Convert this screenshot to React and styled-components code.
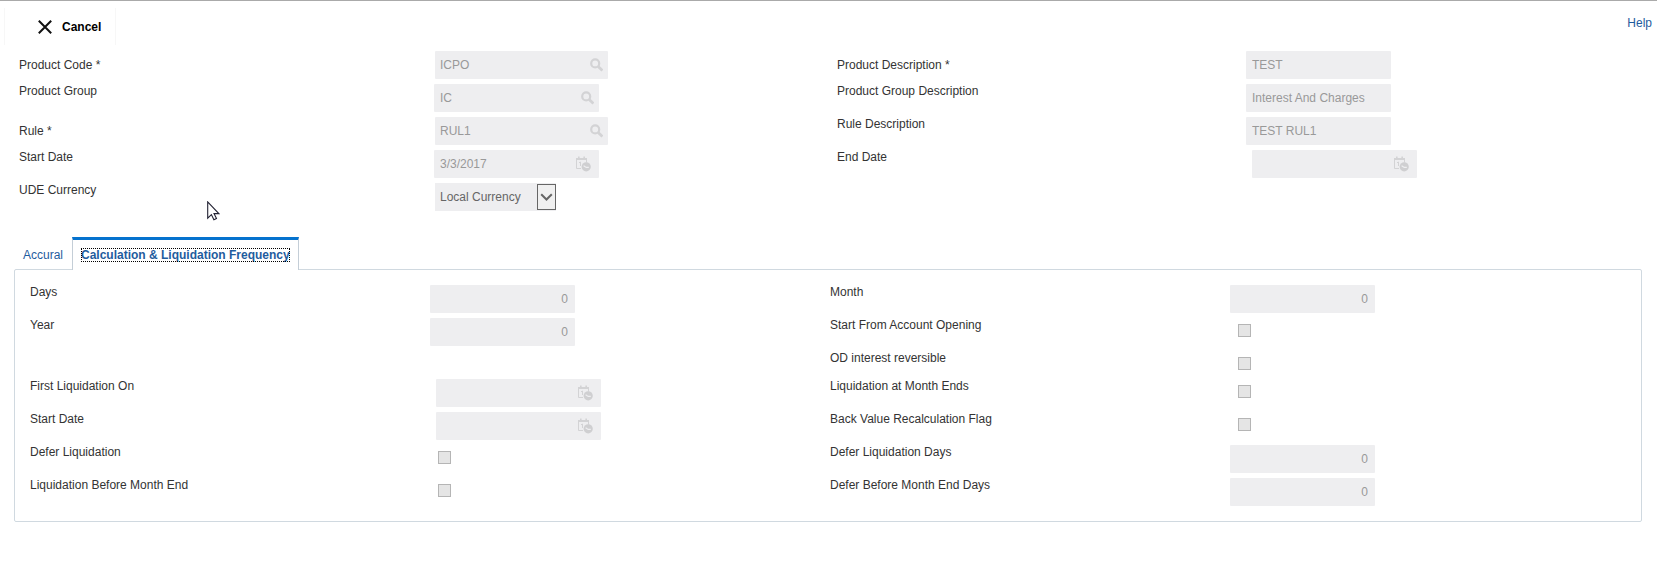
import React from 'react'
import styled, { createGlobalStyle } from 'styled-components'

const headerFields = [
  [
    { id: 'productCode', label: 'Product Code *', type: 'lov', value: 'ICPO', required: true },
    { id: 'productGroup', label: 'Product Group', type: 'lov', value: 'IC' },
    { id: 'rule', label: 'Rule *', type: 'lov', value: 'RUL1', required: true },
    { id: 'startDate', label: 'Start Date', type: 'date', value: '3/3/2017' },
    { id: 'udeCurrency', label: 'UDE Currency', type: 'select', value: 'Local Currency' },
  ],
  [
    { id: 'productDesc', label: 'Product Description *', type: 'text', value: 'TEST', required: true },
    { id: 'groupDesc', label: 'Product Group Description', type: 'text', value: 'Interest And Charges' },
    { id: 'ruleDesc', label: 'Rule Description', type: 'text', value: 'TEST RUL1' },
    { id: 'endDate', label: 'End Date', type: 'date', value: '' },
  ],
]

const frequencyFields = [
  [
    { id: 'days', label: 'Days', type: 'number', value: '0' },
    { id: 'year', label: 'Year', type: 'number', value: '0' },
  ],
  [
    { id: 'month', label: 'Month', type: 'number', value: '0' },
    { id: 'fromOpening', label: 'Start From Account Opening', type: 'check' },
    { id: 'odReversible', label: 'OD interest reversible', type: 'check', short: true },
  ],
]

const liquidationFields = [
  [
    { id: 'firstLiq', label: 'First Liquidation On', type: 'date', value: '' },
    { id: 'liqStart', label: 'Start Date', type: 'date', value: '' },
    { id: 'deferLiq', label: 'Defer Liquidation', type: 'check' },
    { id: 'liqBefore', label: 'Liquidation Before Month End', type: 'check' },
  ],
  [
    { id: 'liqMonthEnds', label: 'Liquidation at Month Ends', type: 'check' },
    { id: 'backValue', label: 'Back Value Recalculation Flag', type: 'check' },
    { id: 'deferDays', label: 'Defer Liquidation Days', type: 'number', value: '0' },
    { id: 'deferBefore', label: 'Defer Before Month End Days', type: 'number', value: '0' },
  ],
]

const SearchIcon = () => (
  <svg width="13" height="14" viewBox="0 0 13 14" fill="none" stroke="#d3d3d5">
    <circle cx="5.2" cy="5.4" r="4" strokeWidth="2.2" />
    <path d="M8.2 8.4l4.2 4.2" strokeWidth="2.8" />
  </svg>
)

const DateIcon = () => (
  <svg width="16" height="16" viewBox="0 0 16 16" fill="none">
    <path d="M6 12.5H1.5v-9M11.5 3.5v3" stroke="#d3d3d5" />
    <path d="M1 3h11" stroke="#d3d3d5" strokeWidth="2" />
    <path d="M3.8 3V.6M9.2 3V.6" stroke="#d3d3d5" strokeWidth="1.6" />
    <path d="M4 6.8l1.5-.8v4" stroke="#d3d3d5" />
    <circle cx="11.2" cy="10.8" r="4.6" fill="#cfcfd1" />
    <path d="M8.6 9.8l2.6 1.6h2.6" stroke="#eeeef0" strokeWidth="1.2" />
  </svg>
)

const CloseIcon = () => (
  <svg width="14" height="14" viewBox="0 0 14 14" stroke="#111" strokeWidth="2">
    <path d="M.8.8l12.4 12.4M13.2.8L.8 13.2" />
  </svg>
)

const Control = ({ id, type, value, required }) => {
  if (type === 'check') {
    return <Checkbox id={id} type="checkbox" disabled />
  }
  if (type === 'select') {
    return (
      <SelectBox>
        <Select id={id} defaultValue={value} disabled>
          <option>{value}</option>
        </Select>
        <Arrow>
          <svg width="13" height="9" viewBox="0 0 13 9" fill="none">
            <path d="M1.2 1.2l5.3 5.3 5.3-5.3" stroke="#666" strokeWidth="2" />
          </svg>
        </Arrow>
      </SelectBox>
    )
  }
  if (type === 'lov' || type === 'date') {
    return (
      <IconField $wide={required}>
        <Input id={id} defaultValue={value} $wide={required} disabled />
        <IconButton type="button" aria-label={type === 'date' ? 'Select date' : 'Search'} $date={type === 'date'} disabled>
          {type === 'date' ? <DateIcon /> : <SearchIcon />}
        </IconButton>
      </IconField>
    )
  }
  return (
    <Field>
      <Input id={id} defaultValue={value} $number={type === 'number'} disabled />
    </Field>
  )
}

const Fields = ({ columns, indent }) => (
  <Columns>
    {columns.map((fields, idx) => (
      <Column key={idx}>
        {fields.map((field) => (
          <Row key={field.id} $middle={field.required} $short={field.short}>
            <Label htmlFor={field.id}>{field.label}</Label>
            <Cell $indent={indent && idx === 0 && (field.required || field.type === 'select')}>
              <Control {...field} />
            </Cell>
          </Row>
        ))}
      </Column>
    ))}
  </Columns>
)

const App = () => {
  return (
    <Page>
      <GlobalStyle />
      <Header>
        <CancelButton type="button">
          <CloseIcon />
          Cancel
        </CancelButton>
        <HelpLink href="#help">Help</HelpLink>
      </Header>

      <Summary>
        <Fields columns={headerFields} indent />
        <Pointer width="13" height="20" viewBox="0 0 13 20">
          <path
            d="M.7.9v16.2l3.7-3.5 2.5 5.2 2.6-1.2-2.5-5h4.8z"
            fill="#fff"
            stroke="#223"
            strokeWidth="1.1"
          />
        </Pointer>
      </Summary>

      <Tabs role="tablist">
        <Tab type="button" role="tab" aria-selected="false">
          <span>Accural</span>
        </Tab>
        <Tab type="button" role="tab" aria-selected="true" $active>
          <span>Calculation &amp; Liquidation Frequency</span>
        </Tab>
      </Tabs>
      <Panel role="tabpanel">
        <Fields columns={frequencyFields} />
        <Fields columns={liquidationFields} />
      </Panel>
    </Page>
  )
}

const GlobalStyle = createGlobalStyle`
  * {
    box-sizing: border-box;
  }
  body {
    margin: 0;
    background: #fff;
  }
  body, button, input, select {
    font-family: 'Liberation Sans', Arial, sans-serif;
    font-size: 12px;
    line-height: 14px;
  }
  svg {
    display: block;
    flex-shrink: 0;
  }
`

const Page = styled.main`
  border-top: 1px solid #aaa;
  color: #333;
`

const Header = styled.header`
  display: flex;
  justify-content: space-between;
  align-items: flex-start;
  padding: 7px 5px 6px 4px;
`

const CancelButton = styled.button`
  display: flex;
  align-items: center;
  gap: 10px;
  height: 37px;
  padding: 0 14px 0 33px;
  border: solid #f7f7f7;
  border-width: 0 1px;
  background: transparent;
  color: #000;
  font-weight: bold;
`

const HelpLink = styled.a`
  padding-top: 8px;
  color: #1f5c9e;
  text-decoration: none;
`

const Summary = styled.section`
  position: relative;
  padding: 0 2px 26px 19px;
`

/* sits over the form */
const Pointer = styled.svg`
  position: absolute;
  left: 207px;
  top: 150px;
`

const Columns = styled.div`
  display: grid;
  grid-template-columns: 1fr 1fr;
`

const Column = styled.div`
  display: flex;
  flex-direction: column;
  gap: 5px;
`

const Row = styled.div`
  display: grid;
  grid-template-columns: 1fr 1fr;
  align-items: ${(props) => (props.$middle ? 'center' : 'start')};
  height: ${(props) => (props.$short ? '23px' : '28px')};
`

const Label = styled.label`
  color: #333;
`

const Cell = styled.div`
  padding-left: ${(props) => (props.$indent ? '7px' : '0')};
`

const Field = styled.div`
  display: flex;
  align-items: center;
  width: 145px;
  height: 28px;
  border-radius: 1px;
  background: #eeeef0;
`

const IconField = styled(Field)`
  width: ${(props) => (props.$wide ? '173px' : '165px')};
  margin-left: ${(props) => (props.$wide ? '0' : '6px')};
`

const Input = styled.input`
  flex: 1;
  min-width: 0;
  height: 28px;
  padding: 0 ${(props) => (props.$number ? '7px' : '6px')} 0 ${(props) => (props.$wide ? '5px' : '6px')};
  border: none;
  background: transparent;
  color: #999;
  text-align: ${(props) => (props.$number ? 'right' : 'left')};
`

const IconButton = styled.button`
  padding: 0 ${(props) => (props.$date ? '8px' : '5px')} 0 0;
  border: none;
  background: transparent;
`

const SelectBox = styled.div`
  position: relative;
  width: 121px;
  height: 28px;
  background: #eeeef0;
`

const Select = styled.select`
  appearance: none;
  width: 100%;
  height: 28px;
  padding: 0 24px 0 5px;
  border: none;
  background: transparent;
  color: #666;
  opacity: 1;
`

const Arrow = styled.span`
  position: absolute;
  top: 1px;
  right: 0;
  display: flex;
  align-items: center;
  justify-content: center;
  width: 19px;
  height: 26px;
  border: 1px solid #666;
  background: #f0f0f0;
  pointer-events: none;
`

const Checkbox = styled.input`
  appearance: none;
  display: block;
  width: 13px;
  height: 13px;
  margin: 6px 0 0 8px;
  border: 1px solid #b5b5b5;
  background: #e5e5e5;
`

const Tabs = styled.div`
  display: flex;
  margin: 0 15px -1px 14px;
`

const Tab = styled.button`
  position: relative;
  height: 33px;
  padding: 2px 9px 0;
  border: none;
  background: transparent;
  color: #1f5c9e;
  ${(props) =>
    props.$active &&
    `
    padding: 0 8px;
    border: solid #c4ced7;
    border-width: 3px 1px 0;
    border-top-color: #0572ce;
    background: #fff;
    font-weight: bold;
    span {
      outline: 1px dotted #000;
      outline-offset: -1px;
    }
  `}
`

const Panel = styled.section`
  display: flex;
  flex-direction: column;
  gap: 5px;
  margin: 0 15px 0 14px;
  padding: 15px 11px 15px 15px;
  border: 1px solid #d0d9e0;
  border-radius: 2px;
`

export default App
